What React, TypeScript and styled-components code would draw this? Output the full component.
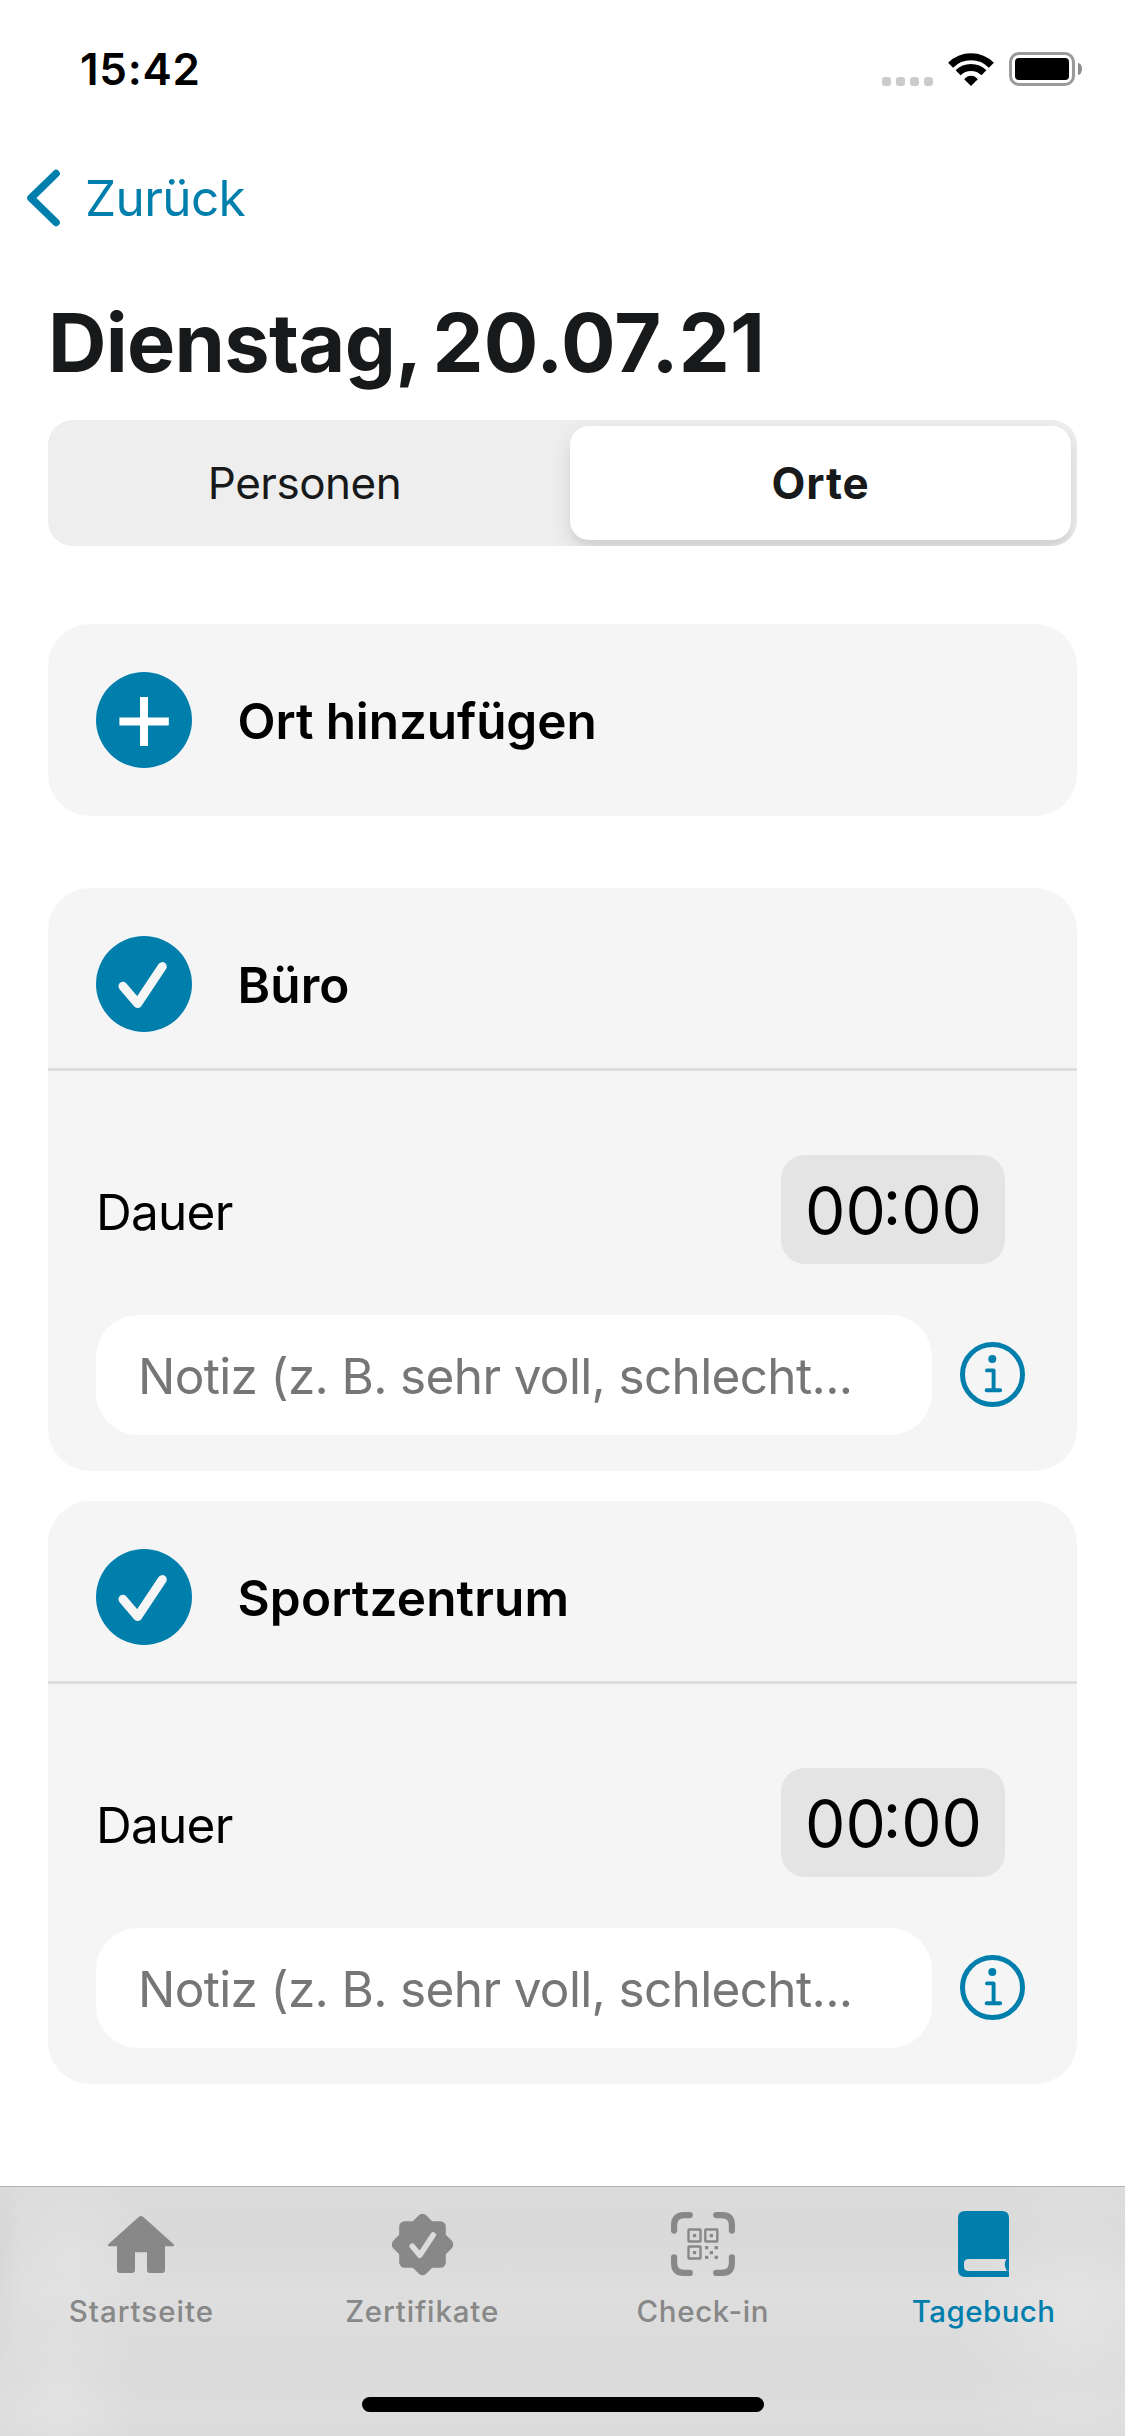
import React from 'react';
import styled, { createGlobalStyle } from 'styled-components';

const color = {
  accent: '#007fad',
  ink: '#17191a',
  card: '#f5f5f5',
  track: '#eeeeee',
  field: '#e4e4e4',
  divider: '#dddddd',
  muted: '#757677',
  tab: '#878887',
  tabBar: '#dcdcdc',
};

const GlobalStyle = createGlobalStyle`
  *, *::before, *::after { box-sizing: border-box; }
  body {
    margin: 0;
    background: #fff;
    font-family: Inter, "Liberation Sans", sans-serif;
    -webkit-font-smoothing: antialiased;
  }
  h1, p { margin: 0; }
  button { font: inherit; border: 0; background: none; padding: 0; }
  svg { display: block; overflow: visible; }
`;

const Screen = styled.div`
  display: flex;
  flex-direction: column;
  width: 1125px;
  height: 2436px;
  overflow: hidden;
  background: #fff;
`;

/* ---------- status bar ---------- */

const StatusBar = styled.header`
  display: flex;
  align-items: center;
  justify-content: space-between;
  height: 138px;
  padding: 0 43px 0 80px;
`;

const Clock = styled.time`
  font-size: 44px;
  line-height: 54px;
  font-weight: 600;
  letter-spacing: 0.7px;
  color: #000;
`;

const StatusIcons = styled.div`
  display: flex;
  align-items: center;
`;

const SignalDots = styled.div`
  display: flex;
  gap: 5px;
  margin: 24px 15px 0 0;
`;

const SignalDot = styled.i`
  width: 9px;
  height: 9px;
  border-radius: 3px;
  background: #cbcbcb;
`;

const BatteryShell = styled.div`
  width: 66px;
  height: 34px;
  margin-left: 15px;
  padding: 3px;
  border: 3px solid #9a9a9a;
  border-radius: 10px;
`;

const BatteryLevel = styled.div`
  height: 100%;
  border-radius: 4px;
  background: #000;
`;

const BatteryCap = styled.div`
  width: 4px;
  height: 12px;
  margin-left: 3px;
  border-radius: 0 4px 4px 0 / 0 6px 6px 0;
  background: #8c8c8c;
`;

/* ---------- navigation and title ---------- */

const NavBar = styled.nav`
  display: flex;
  align-items: center;
  height: 120px;
  padding-left: 27px;
`;

const BackButton = styled.button`
  display: flex;
  align-items: center;
  gap: 25px;
  font-size: 49.5px;
  line-height: 60px;
  letter-spacing: -0.6px;
  color: ${color.accent};
`;

const Content = styled.main`
  padding: 0 48px;
`;

const Title = styled.h1`
  padding: 36px 0 27px;
  font-size: 81px;
  line-height: 99px;
  font-weight: 700;
  letter-spacing: -0.7px;
  word-spacing: -5px;
  color: ${color.ink};
`;

const TitleDate = styled.span`
  letter-spacing: 0.2px;
`;

const Segmented = styled.div`
  display: grid;
  grid-template-columns: 501px 501px;
  gap: 15px;
  height: 126px;
  padding: 6px;
  overflow: hidden;
  border-radius: 25px;
  background: ${color.track};
`;

const Segment = styled.button<{ $active?: boolean }>`
  border-radius: 19px;
  font-size: 44px;
  line-height: 54px;
  font-weight: ${(p) => (p.$active ? 700 : 400)};
  letter-spacing: ${(p) => (p.$active ? '0.9px' : '-0.5px')};
  color: ${color.ink};
  background: ${(p) => (p.$active ? '#fff' : 'transparent')};
  box-shadow: ${(p) =>
    p.$active ? '0 9px 22px rgba(0, 0, 0, 0.11), 0 6px 3px rgba(0, 0, 0, 0.03)' : 'none'};
`;

/* ---------- cards ---------- */

const CardList = styled.div`
  display: flex;
  flex-direction: column;
  gap: 30px;
  margin-top: 72px;
`;

const Card = styled.section`
  border-radius: 42px;
  background: ${color.card};
`;

const AddCard = styled(Card)`
  margin-top: 78px;
`;

const CardHeader = styled.div<{ $divided?: boolean }>`
  display: flex;
  align-items: center;
  gap: 45.5px;
  padding: 48px 48px ${(p) => (p.$divided ? 36 : 48)}px;
  border-bottom: ${(p) => (p.$divided ? `3px solid ${color.divider}` : '0')};
`;

const CardLabel = styled.span<{ $tracking: number }>`
  padding-top: 2px;
  font-size: 49.5px;
  line-height: 60px;
  font-weight: 600;
  letter-spacing: ${(p) => p.$tracking}px;
  color: #000;
`;

const CardBody = styled.div`
  display: flex;
  flex-direction: column;
  gap: 51px;
  padding: 84px 48px 36px;
`;

const DurationRow = styled.div`
  display: flex;
  align-items: center;
  justify-content: space-between;
  height: 109px;
  padding-right: 24px;
`;

const DurationLabel = styled.span`
  padding-top: 5px;
  font-size: 49.5px;
  line-height: 60px;
  letter-spacing: -0.75px;
  color: #000;
`;

const DurationField = styled.div`
  display: flex;
  align-items: center;
  width: 224px;
  height: 109px;
  padding-left: 24px;
  border-radius: 24px;
  background: ${color.field};
  font-size: 64px;
  line-height: 77px;
  color: #000;
`;

const Hours = styled.span`
  padding-top: 2px;
`;

const Colon = styled.span`
  margin: 0 0 16px -3px;
`;

const Minutes = styled.span``;

const NoteRow = styled.div`
  display: flex;
  align-items: center;
  gap: 28px;
`;

const NoteField = styled.div`
  width: 836px;
  height: 120px;
  padding: 31px 42px 29px;
  border-radius: 42px;
  background: #fff;
  font-size: 49.5px;
  line-height: 60px;
  letter-spacing: -0.65px;
  white-space: nowrap;
  color: ${color.muted};
`;

const InfoButton = styled.button`
  margin-bottom: 2px;
`;

/* ---------- tab bar ---------- */

const TabBar = styled.footer`
  display: flex;
  flex-direction: column;
  align-items: center;
  height: 250px;
  margin-top: auto;
  border-top: 1px solid #b1b1b1;
  background:
    radial-gradient(ellipse 80px 120px at 60px 82%, rgba(255, 255, 255, 0.18), transparent),
    radial-gradient(ellipse 90px 80px at 70px 24%, rgba(255, 255, 255, 0.2), transparent),
    radial-gradient(ellipse 22px 110px at 0 30%, rgba(0, 0, 0, 0.025), transparent),
    radial-gradient(ellipse 120px 180px at 1075px 55%, rgba(255, 255, 255, 0.18), transparent),
    linear-gradient(#dbdbdb, #d9d9d9 20%, #dedede 42%, #dadada 76%, #dddddd 90%, #dbdbdb);
`;

const Tabs = styled.div`
  display: grid;
  grid-template-columns: repeat(4, 1fr);
  width: 100%;
  padding: 24px 1px 0;
`;

const Tab = styled.button<{ $active?: boolean; $tracking: number }>`
  display: flex;
  flex-direction: column;
  align-items: center;
  gap: 16px;
  font-size: 29.5px;
  line-height: 36px;
  font-weight: 500;
  letter-spacing: ${(p) => p.$tracking}px;
  color: ${(p) => (p.$active ? color.accent : color.tab)};
`;

const TabIcon = styled.span`
  display: flex;
  align-items: center;
  height: 66px;
`;

const HomeIndicator = styled.div`
  width: 402px;
  height: 15px;
  margin-top: 68px;
  border-radius: 8px;
  background: #000;
`;

/* ---------- icons ---------- */

const WifiIcon = () => (
  <svg width="46" height="33" viewBox="0 0 46 33" fill="none" stroke="#000" strokeWidth="7">
    <path d="M2.6 12.3A28.8 28.8 0 0 1 43.4 12.3" />
    <path d="M10.1 19.8A18.2 18.2 0 0 1 35.9 19.8" />
    <path d="M23 33L16.2 26.2Q19.2 22.8 23 22.8T29.8 26.2Z" fill="#000" stroke="none" />
  </svg>
);

const ChevronIcon = () => (
  <svg width="33" height="57" viewBox="0 0 33 57" fill="none" stroke={color.accent} strokeWidth="7.6" strokeLinecap="round" strokeLinejoin="round">
    <path d="M29 3.6L4 28L29 52.4" />
  </svg>
);

const PlusIcon = () => (
  <svg width="96" height="96" viewBox="0 0 96 96">
    <circle cx="48" cy="48" r="48" fill={color.accent} />
    <path d="M23.4 49.6H72.8M48 25V74" stroke="#fff" strokeWidth="8" />
  </svg>
);

const CheckIcon = () => (
  <svg width="96" height="96" viewBox="0 0 96 96">
    <circle cx="48" cy="48" r="48" fill={color.accent} />
    <path d="M27 50.3L41.7 67.6L66.3 30.6" fill="none" stroke={color.card} strokeWidth="9" strokeLinecap="round" strokeLinejoin="round" />
  </svg>
);

const InfoIcon = () => (
  <svg width="65" height="65" viewBox="0 0 65 65" fill="none" stroke={color.accent}>
    <circle cx="32.5" cy="32.5" r="30" strokeWidth="5" />
    <circle cx="32.3" cy="17" r="4" fill={color.accent} stroke="none" />
    <path d="M27 28.4H33.6V48.3M26.6 48.3H40.2" strokeWidth="3.9" strokeLinecap="round" strokeLinejoin="round" />
  </svg>
);

const HomeIcon = () => (
  <svg width="66" height="57" viewBox="0 0 66 57" fill="currentColor">
    <path d="M31 .8Q33 -.8 35 .8L65.4 28Q67 30.3 64.5 30.3H57V54Q57 57 54 57H42Q39 57 39 54V36.3H27V54Q27 57 24 57H12Q9 57 9 54V30.3H1.5Q-1 30.3 .6 28Z" />
  </svg>
);

const SealIcon = () => (
  <svg width="61" height="61" viewBox="0 0 61 61" fill="currentColor">
    <rect x="7.2" y="7.2" width="46.6" height="46.6" rx="5.5" />
    <rect x="7.2" y="7.2" width="46.6" height="46.6" rx="5.5" transform="rotate(45 30.5 30.5)" />
    <path d="M20.3 32.2L27.8 41.2L41.2 21" fill="none" stroke={color.tabBar} strokeWidth="5.6" strokeLinecap="round" strokeLinejoin="round" />
  </svg>
);

const ScanIcon = () => (
  <svg width="64" height="64" viewBox="0 0 64 64" fill="none" stroke="currentColor">
    <g strokeWidth="6.2" strokeLinecap="round">
      <path d="M3.1 18.6V13Q3.1 3.1 13 3.1H18.8" />
      <path d="M45.2 3.1H51Q60.9 3.1 60.9 13V18.6" />
      <path d="M3.1 45.4V51Q3.1 60.9 13 60.9H18.8" />
      <path d="M45.2 60.9H51Q60.9 60.9 60.9 51V45.4" />
    </g>
    <g strokeWidth="2.4">
      <rect x="17.5" y="17.5" width="12" height="12" rx=".6" />
      <rect x="34.3" y="17.5" width="12" height="12" rx=".6" />
      <rect x="17.5" y="34.5" width="12" height="12" rx=".6" />
    </g>
    <path
      d="M21.9 21.9h3.3v3.3h-3.3zM38.7 21.9h3.3v3.3h-3.3zM21.9 38.9h3.3v3.3h-3.3zM34 34h3.3v3.3h-3.3zM43.6 34h3.3v3.3h-3.3zM38.7 38.9h3.3v3.3h-3.3zM34 43.8h3.3v3.3h-3.3zM43.6 43.8h3.3v3.3h-3.3z"
      fill="currentColor"
      stroke="none"
    />
  </svg>
);

const BookIcon = () => (
  <svg width="51" height="66" viewBox="0 0 51 66" fill="currentColor" fillRule="evenodd">
    <path d="M7 0H44Q51 0 51 7V59.4Q49.5 60 51 60.6V65.5Q50.6 66 50 66H7Q0 66 0 59V7Q0 0 7 0ZM10 48Q6 48.4 6 52V56Q6 59.6 10 60H49Q45 54 48.3 48Z" />
  </svg>
);

/* ---------- screen ---------- */

const places = [
  { name: 'Büro', tracking: 0.1 },
  { name: 'Sportzentrum', tracking: 0.15 },
];

const tabs = [
  { label: 'Startseite', tracking: 1, Icon: HomeIcon },
  { label: 'Zertifikate', tracking: 0.85, Icon: SealIcon },
  { label: 'Check-in', tracking: 0.65, Icon: ScanIcon },
  { label: 'Tagebuch', tracking: 0.45, Icon: BookIcon, active: true },
];

function PlaceCard({ name, tracking }: { name: string; tracking: number }) {
  return (
    <Card>
      <CardHeader $divided>
        <CheckIcon />
        <CardLabel $tracking={tracking}>{name}</CardLabel>
      </CardHeader>
      <CardBody>
        <DurationRow>
          <DurationLabel>Dauer</DurationLabel>
          <DurationField>
            <Hours>00</Hours>
            <Colon>:</Colon>
            <Minutes>00</Minutes>
          </DurationField>
        </DurationRow>
        <NoteRow>
          <NoteField>Notiz (z. B. sehr voll, schlecht...</NoteField>
          <InfoButton>
            <InfoIcon />
          </InfoButton>
        </NoteRow>
      </CardBody>
    </Card>
  );
}

export default function App() {
  return (
    <Screen>
      <GlobalStyle />
      <StatusBar>
        <Clock>15:42</Clock>
        <StatusIcons>
          <SignalDots>
            {[0, 1, 2, 3].map((i) => (
              <SignalDot key={i} />
            ))}
          </SignalDots>
          <WifiIcon />
          <BatteryShell>
            <BatteryLevel />
          </BatteryShell>
          <BatteryCap />
        </StatusIcons>
      </StatusBar>
      <NavBar>
        <BackButton>
          <ChevronIcon />
          Zurück
        </BackButton>
      </NavBar>
      <Content>
        <Title>
          Dienstag, <TitleDate>20.07.21</TitleDate>
        </Title>
        <Segmented>
          <Segment>Personen</Segment>
          <Segment $active>Orte</Segment>
        </Segmented>
        <AddCard>
          <CardHeader>
            <PlusIcon />
            <CardLabel $tracking={-0.1}>Ort hinzufügen</CardLabel>
          </CardHeader>
        </AddCard>
        <CardList>
          {places.map((place) => (
            <PlaceCard key={place.name} {...place} />
          ))}
        </CardList>
      </Content>
      <TabBar>
        <Tabs>
          {tabs.map(({ label, tracking, Icon, active }) => (
            <Tab key={label} $active={active} $tracking={tracking}>
              <TabIcon>
                <Icon />
              </TabIcon>
              {label}
            </Tab>
          ))}
        </Tabs>
        <HomeIndicator />
      </TabBar>
    </Screen>
  );
}
